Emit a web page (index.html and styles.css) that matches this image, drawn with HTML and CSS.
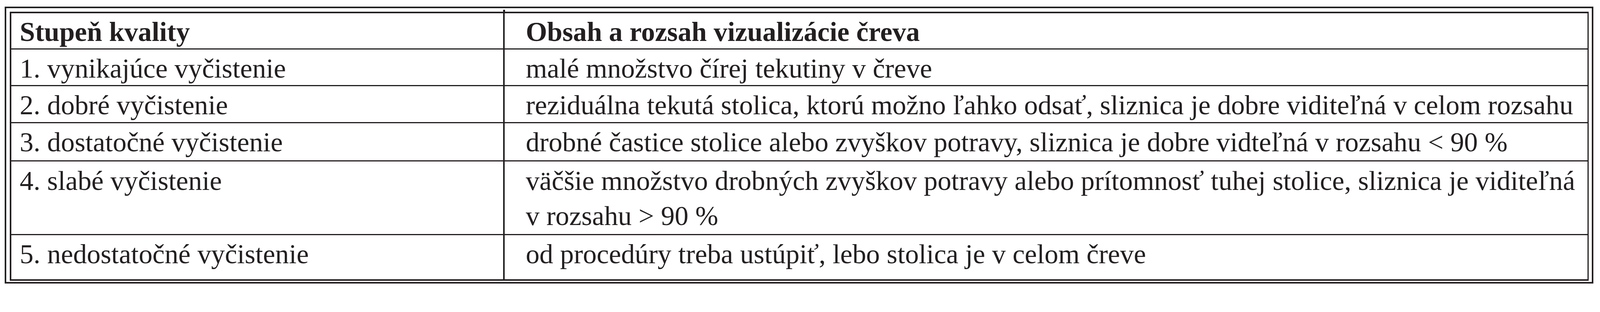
FILE: index.html
```html
<!DOCTYPE html>
<html lang="sk">
<head>
<meta charset="utf-8">
<title>Stupeň kvality</title>
<link rel="stylesheet" href="styles.css">
</head>
<body>
<div class="frame">
  <table class="grid">
    <thead>
      <tr class="row-head">
        <th class="c1">Stupeň kvality</th>
        <th class="c2">Obsah a rozsah vizualizácie čreva</th>
      </tr>
    </thead>
    <tbody>
      <tr class="row-1">
        <td class="c1">1. vynikajúce vyčistenie</td>
        <td class="c2">malé množstvo čírej tekutiny v čreve</td>
      </tr>
      <tr class="row-2">
        <td class="c1">2. dobré vyčistenie</td>
        <td class="c2">reziduálna tekutá stolica, ktorú možno ľahko odsať, sliznica je dobre viditeľná v celom rozsahu</td>
      </tr>
      <tr class="row-3">
        <td class="c1">3. dostatočné vyčistenie</td>
        <td class="c2">drobné častice stolice alebo zvyškov potravy, sliznica je dobre vidteľná v rozsahu &lt; 90 %</td>
      </tr>
      <tr class="row-4">
        <td class="c1">4. slabé vyčistenie</td>
        <td class="c2">väčšie množstvo drobných zvyškov potravy alebo prítomnosť tuhej stolice, sliznica je viditeľná<br>v rozsahu &gt; 90 %</td>
      </tr>
      <tr class="row-5">
        <td class="c1">5. nedostatočné vyčistenie</td>
        <td class="c2">od procedúry treba ustúpiť, lebo stolica je v celom čreve</td>
      </tr>
    </tbody>
  </table>
</div>
</body>
</html>
```

FILE: styles.css
```css
:root {
  /* one pixel of the reference picture, in CSS px */
  --u: 0.9462px;
  --ink: #231f20;
}

html, body {
  margin: 0;
  padding: 0;
  background: #ffffff;
}

body {
  font-family: "Liberation Serif", "Times New Roman", serif;
  color: var(--ink);
}

.frame {
  box-sizing: border-box;
  width: calc(4298 * var(--u));
  margin: calc(18 * var(--u)) 0 0 calc(13 * var(--u));
  border: calc(5 * var(--u)) solid var(--ink);
  padding: calc(9 * var(--u)) calc(9 * var(--u)) calc(4 * var(--u)) calc(9 * var(--u));
}

.grid {
  width: 100%;
  border-collapse: separate;
  border-spacing: 0;
  table-layout: fixed;
  border-top: calc(5 * var(--u)) solid var(--ink);
  border-left: calc(5 * var(--u)) solid var(--ink);
  border-right: calc(4 * var(--u)) solid var(--ink);
  border-bottom: calc(5 * var(--u)) solid var(--ink);
}

.grid th,
.grid td {
  font-size: calc(74.3 * var(--u));
  line-height: calc(90 * var(--u));
  padding: calc(6 * var(--u)) 0 0 0;
  text-align: left;
  vertical-align: top;
  white-space: nowrap;
  border-bottom: calc(4 * var(--u)) solid var(--ink);
}

.grid th {
  font-weight: bold;
}

.grid .c1 {
  box-sizing: border-box;
  width: calc(1335 * var(--u));
  padding-left: calc(23 * var(--u));
  border-right: calc(5 * var(--u)) solid var(--ink);
}

.grid .c2 {
  padding-left: calc(57 * var(--u));
}

.row-head .c1 {
  position: relative;
}

.row-head .c1::after {
  content: "";
  position: absolute;
  right: calc(-5 * var(--u));
  top: calc(-9 * var(--u));
  width: calc(5 * var(--u));
  height: calc(9 * var(--u));
  background: var(--ink);
}

.row-2 td {
  padding-bottom: calc(1 * var(--u));
}

.row-3 td {
  padding-bottom: calc(4 * var(--u));
}

.row-4 td {
  line-height: calc(95 * var(--u));
  padding-bottom: calc(1 * var(--u));
}

.row-5 td {
  padding-bottom: calc(23 * var(--u));
  border-bottom: none;
}
```
